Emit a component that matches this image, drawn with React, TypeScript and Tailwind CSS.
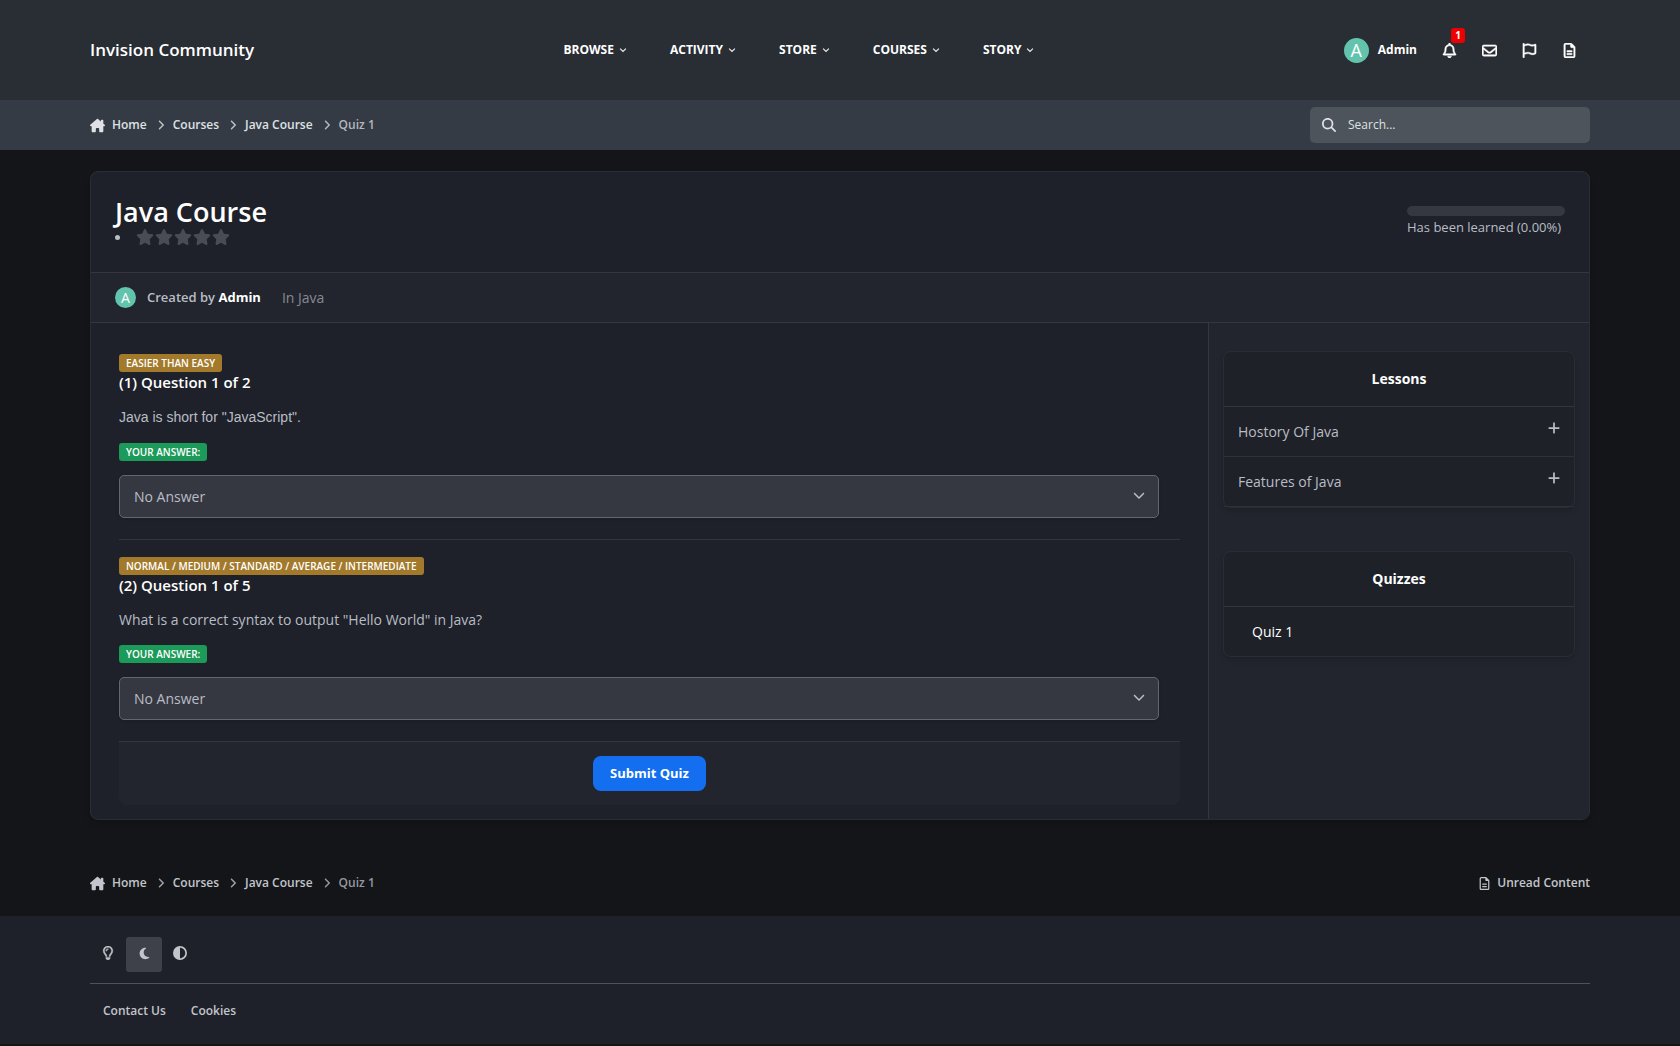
import type { ReactNode } from "react";
import {
  FaAngleDown,
  FaAngleRight,
  FaChevronDown,
  FaCircleHalfStroke,
  FaHouseChimney,
  FaMagnifyingGlass,
  FaMoon,
  FaPlus,
  FaRegBell,
  FaRegEnvelope,
  FaRegFileLines,
  FaRegFlag,
  FaRegLightbulb,
  FaStar,
} from "react-icons/fa6";

const NAV = ["Browse", "Activity", "Store", "Courses", "Story"];
const CRUMBS = ["Courses", "Java Course"];

const QUESTIONS = [
  {
    id: "q1",
    level: "Easier than easy",
    title: "(1) Question 1 of 2",
    text: 'Java is short for "JavaScript".',
    textClass: "font-['Liberation_Sans',Arial,sans-serif] leading-[23px]",
  },
  {
    id: "q2",
    level: "Normal / Medium / Standard / Average / Intermediate",
    title: "(2) Question 1 of 5",
    text: 'What is a correct syntax to output "Hello World" in Java?',
    textClass: "leading-[22px]",
  },
];

function Container({ children, className = "" }: { children: ReactNode; className?: string }) {
  return <div className={`mx-auto w-full max-w-[1532px] px-4 ${className}`}>{children}</div>;
}

function Avatar({ className }: { className: string }) {
  return (
    <span className={`flex items-center justify-center rounded-full bg-[#62c4ad] text-white ${className}`}>
      A
    </span>
  );
}

function Breadcrumbs({ linkClass, lastClass }: { linkClass: string; lastClass: string }) {
  return (
    <nav aria-label="Breadcrumb" className={linkClass}>
      <ol className="flex items-center gap-2 text-[12px] leading-[18px] font-semibold">
        <li className="flex items-center">
          <a href="#" className="flex items-center gap-[7px]">
            <FaHouseChimney className="size-[15px]" />
            Home
          </a>
        </li>
        {CRUMBS.map(c => (
          <li key={c} className="flex items-center gap-[6px]">
            <FaAngleRight className="size-3 opacity-80" />
            <a href="#">{c}</a>
          </li>
        ))}
        <li className={`flex items-center gap-[6px] ${lastClass}`}>
          <FaAngleRight className="size-3" />
          Quiz 1
        </li>
      </ol>
    </nav>
  );
}

function Header() {
  return (
    <header className="bg-[#292d34]">
      <Container className="flex h-[100px] items-center justify-between text-white">
        <a href="#" className="text-[17px] font-semibold">
          Invision Community
        </a>
        <nav aria-label="Main" className="flex items-center gap-[43px]">
          {NAV.map(n => (
            <button key={n} className="flex items-center gap-[5px] text-xs font-bold uppercase">
              {n}
              <FaAngleDown className="size-2 [stroke-width:16]" />
            </button>
          ))}
        </nav>
        <div className="flex items-center justify-end pr-[13px]">
          <button className="mr-[25px] flex items-center gap-[9px] text-[12px] font-bold">
            <Avatar className="size-[25px] text-[18px] font-normal" />
            Admin
          </button>
          <div className="flex items-center gap-[25px]">
            <button aria-label="Notifications" className="relative">
              <FaRegBell className="size-[15px] [stroke-width:16]" />
              <span className="absolute -top-[15px] left-[9px] flex h-[15px] w-[14px] items-center justify-center rounded-[3px] bg-[#ee0000] text-[10px] font-bold">
                1
              </span>
            </button>
            <button aria-label="Messages">
              <FaRegEnvelope className="size-[15px] [stroke-width:16]" />
            </button>
            <button aria-label="Reports">
              <FaRegFlag className="size-[15px] [stroke-width:16]" />
            </button>
            <button aria-label="Unread content">
              <FaRegFileLines className="size-[15px] [stroke-width:16]" />
            </button>
          </div>
        </div>
      </Container>
    </header>
  );
}

function SubHeader() {
  return (
    <div className="bg-[#343b44]">
      <Container className="flex h-[50px] items-center justify-between">
        <Breadcrumbs linkClass="text-[#dfe1e4]" lastClass="text-[#b3b7bd]" />
        <label className="flex h-9 w-[280px] items-center gap-3 rounded-[5px] bg-[#4d545b] px-3 text-[#dfe1e4]">
          <FaMagnifyingGlass className="size-[14px]" />
          <input
            type="search"
            aria-label="Search"
            placeholder="Search..."
            className="min-w-0 flex-1 bg-transparent text-[12px] outline-none placeholder:text-[#dfe1e4]"
          />
        </label>
      </Container>
    </div>
  );
}

function Badge({ children, className }: { children: ReactNode; className: string }) {
  return (
    <span
      className={`block h-[18px] w-fit rounded-[3px] px-[7px] text-[10px] leading-[18px] font-semibold text-white uppercase ${className}`}
    >
      {children}
    </span>
  );
}

function Question({ q }: { q: (typeof QUESTIONS)[number] }) {
  return (
    <li className="border-b border-[#33363f] pt-[17px] pb-[21px]">
      <Badge className="bg-[#a37a2c]">{q.level}</Badge>
      <h3 className="text-[15px] leading-[21px] font-semibold text-white">{q.title}</h3>
      <p className={`mt-[13px] text-[14px] ${q.textClass}`}>{q.text}</p>
      <Badge className="mt-[14px] bg-[#1b9a59]">Your answer:</Badge>
      <div className="relative mt-[14px] mr-[21px]">
        <select
          id={q.id}
          aria-label={q.title}
          className="block h-[43px] w-full appearance-none rounded-[5px] border border-[#64676f] bg-[#353841] px-[14px] text-[14px] shadow-sm"
        >
          <option>No Answer</option>
        </select>
        <FaChevronDown className="pointer-events-none absolute top-[14px] right-[14px] size-3" />
      </div>
    </li>
  );
}

function SideBox({ title, children }: { title: string; children: ReactNode }) {
  return (
    <section className="rounded-lg border border-[#2a2d35] bg-[#1e2128] shadow-md">
      <h2 className="border-b border-[#343741] py-4 text-center text-[14px] leading-[22px] font-bold text-white">
        {title}
      </h2>
      {children}
    </section>
  );
}

function Sidebar() {
  return (
    <aside className="flex w-[381px] shrink-0 flex-col gap-[43px] border-l border-[#343741] bg-[#22252d] px-[14px] pt-7">
      <SideBox title="Lessons">
        <ul>
          {["Hostory Of Java", "Features of Java"].map(l => (
            <li key={l} className="border-b border-[#2e3139]">
              <button className="flex h-[49px] w-full items-center justify-between pr-[13px] pl-[14px] text-left text-[14px]">
                {l}
                <FaPlus className="mb-2 size-[14px]" />
              </button>
            </li>
          ))}
        </ul>
      </SideBox>
      <SideBox title="Quizzes">
        <a href="#" className="flex h-[49px] items-center px-7 text-[14px] text-white">
          Quiz 1
        </a>
      </SideBox>
    </aside>
  );
}

function Course() {
  return (
    <main className="overflow-hidden rounded-lg border border-[#2a2d33] bg-[#1e2129] shadow-md">
      <div className="flex h-[100px] items-start justify-between px-6 pt-6">
        <div>
          <h1 className="text-[27px] leading-8 font-semibold text-white">Java Course</h1>
          <div className="flex items-center gap-4">
            <span className="size-[5px] rounded-full bg-[#b9bdc5]" />
            <span className="flex gap-px text-[#494c54]" role="img" aria-label="No rating">
              {[1, 2, 3, 4, 5].map(s => (
                <FaStar key={s} className="size-[18px]" />
              ))}
            </span>
          </div>
        </div>
        <div className="min-w-[158px] pt-[10px]">
          <div className="h-[10px] rounded-full bg-[#353841]" />
          <p className="text-[13px] leading-[22px]">Has been learned (0.00%)</p>
        </div>
      </div>

      <div className="flex h-[51px] items-center border-y border-[#343741] bg-[#22252d] px-6">
        <Avatar className="size-[21px] text-[14px]" />
        <p className="ml-[11px] text-[13px] font-semibold">
          Created by{" "}
          <a href="#" className="font-bold text-white">
            Admin
          </a>
        </p>
        <a href="#" className="ml-[21px] text-[14px] text-[#868a93]">
          In Java
        </a>
      </div>

      <div className="flex">
        <form className="min-w-0 flex-1 px-7 pt-[14px] pb-[14px]" onSubmit={e => e.preventDefault()}>
          <ol>
            {QUESTIONS.map(q => (
              <Question key={q.id} q={q} />
            ))}
          </ol>
          <div className="flex justify-center rounded-b-lg bg-[#22252d] py-[14px]">
            <button
              type="submit"
              className="h-[35px] rounded-lg bg-[#146ff0] px-[17px] text-[13px] font-bold text-white"
            >
              Submit Quiz
            </button>
          </div>
        </form>
        <Sidebar />
      </div>
    </main>
  );
}

function Footer() {
  return (
    <footer className="bg-[#1e2129]">
      <Container className="pt-[21px] pb-[22px]">
        <div className="flex h-[35px] text-[#c2c5cb]" role="group" aria-label="Theme">
          <button aria-label="Light" className="flex w-9 items-center justify-center pb-[3px]">
            <FaRegLightbulb className="size-[14px] [stroke-width:16]" />
          </button>
          <button
            aria-label="Dark"
            aria-pressed="true"
            className="flex w-9 items-center justify-center rounded-[3px] bg-[#3e4149] pb-[3px]"
          >
            <FaMoon className="size-[13px]" />
          </button>
          <button aria-label="System" className="flex w-9 items-center justify-center pb-[3px]">
            <FaCircleHalfStroke className="size-[14px]" />
          </button>
        </div>
        <ul className="mt-[11px] flex gap-[25px] border-t border-[#4f525b] px-[13px] pt-4 text-[12px] leading-[22px] font-semibold text-[#c2c5cb]">
          <li>
            <a href="#">Contact Us</a>
          </li>
          <li>
            <a href="#">Cookies</a>
          </li>
        </ul>
      </Container>
    </footer>
  );
}

export default function App() {
  return (
    <div className="min-h-screen bg-[#141518] font-['Open_Sans','Noto_Sans',sans-serif] text-[#b9bdc5]">
      <Header />
      <SubHeader />
      <Container className="pt-[21px]">
        <Course />
        <div className="flex items-center justify-between pt-[54px] pb-6 text-[#c2c5cb]">
          <Breadcrumbs linkClass="text-[#c2c5cb]" lastClass="text-[#9498a0]" />
          <a href="#" className="flex items-center gap-[6px] text-[12px] leading-[18px] font-semibold">
            <FaRegFileLines className="size-[13px]" />
            Unread Content
          </a>
        </div>
      </Container>
      <Footer />
    </div>
  );
}
